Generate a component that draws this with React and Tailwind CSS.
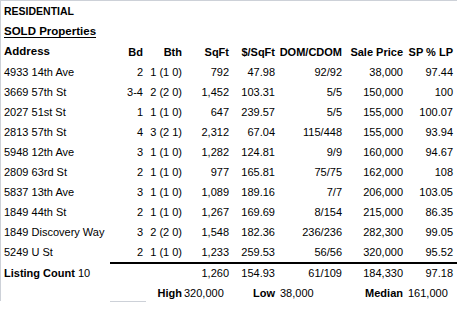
const rows = [
  ["4933 14th Ave", "2", "1 (1 0)", "792", "47.98", "92/92", "38,000", "97.44"],
  ["3669 57th St", "3-4", "2 (2 0)", "1,452", "103.31", "5/5", "150,000", "100"],
  ["2027 51st St", "1", "1 (1 0)", "647", "239.57", "5/5", "155,000", "100.07"],
  ["2813 57th St", "4", "3 (2 1)", "2,312", "67.04", "115/448", "155,000", "93.94"],
  ["5948 12th Ave", "3", "1 (1 0)", "1,282", "124.81", "9/9", "160,000", "94.67"],
  ["2809 63rd St", "2", "1 (1 0)", "977", "165.81", "75/75", "162,000", "108"],
  ["5837 13th Ave", "3", "1 (1 0)", "1,089", "189.16", "7/7", "206,000", "103.05"],
  ["1849 44th St", "2", "1 (1 0)", "1,267", "169.69", "8/154", "215,000", "86.35"],
  ["1849 Discovery Way", "3", "2 (2 0)", "1,548", "182.36", "236/236", "282,300", "99.05"],
  ["5249 U St", "2", "1 (1 0)", "1,233", "259.53", "56/56", "320,000", "95.52"],
];

const cols = "grid grid-cols-[106px_33px_39px_47px_46px_67px_61px_50px]";

export default function App() {
  return (
    <div className="w-[457px] h-[314px] bg-white text-black font-['Liberation_Sans',Arial,sans-serif]">
      <div className="h-[301px] border-t border-l border-[#cdd1d8] pl-[3px] pt-[1px] relative">
        <div className="h-5 flex items-center text-[10.5px] font-bold">RESIDENTIAL</div>
        <div className="h-5 flex items-center text-[11.5px] font-bold underline underline-offset-2">SOLD Properties</div>
        <div className={`${cols} h-5 items-center text-[11px] font-bold`}>
          <div className="text-[11.5px]">Address</div>
          <div className="text-right">Bd</div>
          <div className="text-right">Bth</div>
          <div className="text-right">SqFt</div>
          <div className="text-right">$/SqFt</div>
          <div className="text-right">DOM/CDOM</div>
          <div className="text-right">Sale Price</div>
          <div className="text-right">SP % LP</div>
        </div>
        {rows.map((r) => (
          <div key={r[0]} className={`${cols} h-5 items-center text-[11px]`}>
            {r.map((c, i) => (
              <div key={i} className={i === 0 ? "whitespace-nowrap" : "text-right whitespace-nowrap"}>{c}</div>
            ))}
          </div>
        ))}
        <div className="flex">
          <div className="w-[106px]" />
          <div className="flex-1 border-t-2 border-black mr-[-4px]" />
        </div>
        <div className={`${cols} h-[19px] items-center text-[11px]`}>
          <div className="col-span-3 whitespace-nowrap"><span className="font-bold">Listing Count</span> 10</div>
          <div className="text-right">1,260</div>
          <div className="text-right">154.93</div>
          <div className="text-right">61/109</div>
          <div className="text-right">184,330</div>
          <div className="text-right">97.18</div>
        </div>
        <div className={`${cols} h-5 items-center text-[11px]`}>
          <div className="col-span-3 text-right font-bold">High</div>
          <div className="pl-[2px]">320,000</div>
          <div className="text-right font-bold">Low</div>
          <div className="pl-[5px]">38,000</div>
          <div className="text-right font-bold">Median</div>
          <div className="pl-[5px] whitespace-nowrap">161,000</div>
        </div>
      </div>
      <div className="ml-[110px] w-[36px] h-px bg-[#cdd1d8]" />
    </div>
  );
}
